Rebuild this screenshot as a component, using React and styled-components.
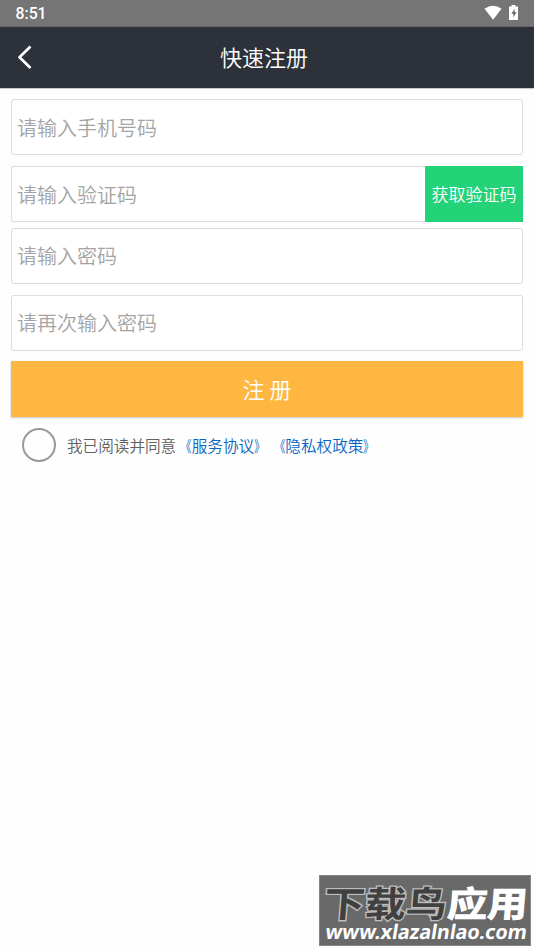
import React from "react";
import styled, { createGlobalStyle } from "styled-components";

const Global = createGlobalStyle`
  * { box-sizing: border-box; }
  body {
    margin: 0;
    background: #fff;
    font-family: Roboto, "Noto Sans CJK SC", sans-serif;
  }
`;

const Screen = styled.div`
  position: relative;
  height: 950px;
  overflow: hidden;
  background: #fefefe;
`;

const StatusBar = styled.div`
  height: 27px;
  padding: 0 15px;
  display: flex;
  justify-content: space-between;
  background: #757575;
  border-bottom: 1px solid #64686b;
`;

const Clock = styled.span`
  padding-left: 0.5px;
  color: #fff;
  font: 500 15.8px/28px Roboto, sans-serif;
`;

const StatusIcons = styled.svg`
  display: block;
  width: 36px;
  height: 26px;
`;

const Header = styled.header`
  height: 62px;
  display: grid;
  grid-template-columns: 49px 1fr 55px;
  background: #2d3139;
  border-bottom: 1px solid #c9cacc;
`;

const BackIcon = styled.svg`
  width: 49px;
  height: 61px;
`;

const Title = styled.h1`
  margin: 0;
  color: #fff;
  font-family: "Noto Sans CJK SC", sans-serif;
  font-size: 22px;
  font-weight: 350;
  line-height: 59px;
  text-align: center;
`;

const Form = styled.form`
  margin: 10px 11px 0;
  display: flex;
  flex-direction: column;
`;

const Row = styled.div`
  display: flex;
  margin-bottom: ${(p) => p.$gap ?? 11}px;
`;

const Input = styled.input`
  flex: 1;
  min-width: 0;
  height: 56px;
  padding: 0 6px ${(p) => (p.$raised ? 2 : 0)}px 5px;
  border: 1px solid #dcdcdc;
  border-radius: ${(p) => (p.$joined ? "3px 0 0 3px" : "3px")};
  border-right-width: ${(p) => (p.$joined ? 0 : 1)}px;
  background: #fff;
  outline: none;
  font-family: "Noto Sans CJK SC", sans-serif;
  font-size: 20px;
  font-weight: 350;
  &::placeholder { color: #a4a4a4; opacity: 1; }
`;

const CodeButton = styled.button`
  width: 98px;
  height: 56px;
  padding: 0 0 2px;
  border: 0;
  background: #24d278;
  color: #fff;
  font-family: "Noto Sans CJK SC", sans-serif;
  font-size: 17px;
  font-weight: 350;
  white-space: nowrap;
`;

const Submit = styled.button`
  height: 56px;
  padding: 0 0 2px;
  border: 0;
  background: #ffb742;
  box-shadow: 0 1px 2px #c8c8c8;
  color: #fff;
  font-family: "Noto Sans CJK SC", sans-serif;
  font-size: 22px;
  font-weight: 350;
`;

const Agreement = styled.label`
  display: flex;
  align-items: center;
  height: 34px;
  margin: 11px 0 0 11px;
  color: #606060;
  font-family: "Noto Sans CJK SC", sans-serif;
  font-size: 15.6px;
  font-weight: 350;
  white-space: nowrap;
`;

const Radio = styled.span`
  width: 34px;
  height: 34px;
  margin-right: 11px;
  border: 2px solid #999;
  border-radius: 50%;
`;

const Link = styled.a`
  color: #0866c2;
`;

const Bracket = styled.span`
  display: inline-block;
  width: 15.6px;
  transform: scaleX(0.72);
  transform-origin: ${(p) => (p.$open ? "right" : "left")} center;
`;

const Watermark = styled.div`
  position: absolute;
  left: 319px;
  top: 875px;
  width: 212px;
  height: 71px;
  background: #696969;
  border: 1px solid #858585;
`;

const Brand = styled.svg`
  display: block;
  width: 210px;
  height: 69px;
  overflow: visible;
`;

const BrandName = styled.text`
  font-family: "Noto Sans CJK SC", sans-serif;
  font-size: 41px;
  font-weight: ${(p) => (p.$dark ? 700 : 900)};
  fill: ${(p) => (p.$dark ? "#404040" : "#fff")};
  stroke: ${(p) => (p.$dark ? "#bdbdbd" : "none")};
  stroke-width: 3px;
  paint-order: stroke;
`;

const BrandUrl = styled.text`
  font-family: "Noto Sans", sans-serif;
  font-size: 20px;
  font-weight: 700;
  fill: #fff;
`;

const LinkText = ({ children }) => (
  <Link><Bracket $open>《</Bracket>{children}<Bracket>》</Bracket></Link>
);

export default function App() {
  return (
    <Screen>
      <Global />
      <StatusBar>
        <Clock>8:51</Clock>
        <StatusIcons viewBox="483 0 36 26">
          <path d="M484.5 8.7Q493 2.7 501.5 8.7L493.1 19.7Z" fill="#fff" />
          <path d="M511.5 5h4v1.5h2.5v13.4h-9V6.5h2.5Z" fill="#fff" />
          <path d="M514.8 8.8 511.3 13.8h2v3.8l3.2-5.6h-2Z" fill="#686868" />
        </StatusIcons>
      </StatusBar>
      <Header>
        <BackIcon viewBox="0 27 49 61" fill="none" stroke="#fff" strokeWidth="2.7">
          <path d="M30.5 46.5 19.5 57.3 30.5 68" strokeLinejoin="round" />
        </BackIcon>
        <Title>快速注册</Title>
      </Header>
      <Form>
        <Row><Input placeholder="请输入手机号码" /></Row>
        <Row $gap={6}>
          <Input $joined placeholder="请输入验证码" />
          <CodeButton type="button">获取验证码</CodeButton>
        </Row>
        <Row><Input $raised placeholder="请输入密码" /></Row>
        <Row $gap={10}><Input $raised placeholder="请再次输入密码" /></Row>
        <Submit type="button">注 册</Submit>
        <Agreement>
          <Radio />
          我已阅读并同意<LinkText>服务协议</LinkText><LinkText>隐私权政策</LinkText>
        </Agreement>
      </Form>
      <Watermark>
        <Brand viewBox="320 876 210 69">
          <g transform="translate(323 917) scale(1 .87) skewX(-4)">
            <BrandName $dark textLength="123">下载鸟</BrandName>
            <BrandName x="123" textLength="81">应用</BrandName>
          </g>
          <g transform="translate(324.5 939) skewX(-9)">
            <BrandUrl textLength="201.5" lengthAdjust="spacingAndGlyphs">www.xlazalnlao.com</BrandUrl>
          </g>
        </Brand>
      </Watermark>
    </Screen>
  );
}
